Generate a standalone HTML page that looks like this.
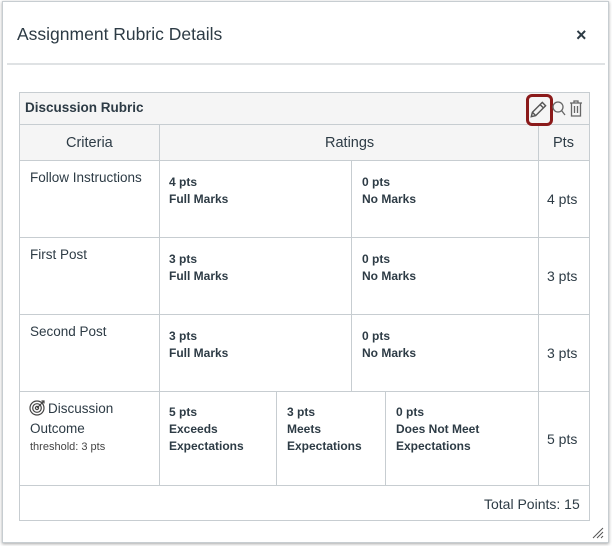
<!DOCTYPE html>
<html><head><style>
*{margin:0;padding:0;box-sizing:border-box}
body{width:612px;height:546px;background:#fff;font-family:"Liberation Sans",sans-serif;color:#2d3b45;position:relative;overflow:hidden}
.a{position:absolute}
.dlg{left:2px;top:1px;width:607px;height:542px;border:1px solid #c7cdd1;box-shadow:0 1px 3px rgba(0,0,0,.35)}
.t{font-size:17.5px;color:#2d3b45}
.hl{left:7px;top:63px;width:598px;height:2px;background:#dfe2e4}
.v{background:#c7cdd1;width:1px}
.h{background:#c7cdd1;height:1px}
.s{font-size:12px;font-weight:bold;line-height:17px;color:#2d3b45}
.c{font-size:13.5px;color:#2d3b45}
.p{font-size:14px;color:#2d3b45}
</style></head><body>
<div class="a dlg"></div>
<div class="a t" style="left:17px;top:24px">Assignment Rubric Details</div>
<div class="a" style="left:576px;top:25px;font-size:18px;font-weight:bold;color:#2d3b45">×</div>
<div class="a hl"></div>
<div class="a" style="left:19px;top:92px;width:571px;height:429px;border:1px solid #c7cdd1"></div>
<div class="a" style="left:20px;top:93px;width:569px;height:67px;background:#f5f5f5"></div>
<div class="a h" style="left:19px;top:124px;width:571px"></div>
<div class="a h" style="left:19px;top:160px;width:571px"></div>
<div class="a h" style="left:19px;top:237px;width:571px"></div>
<div class="a h" style="left:19px;top:314px;width:571px"></div>
<div class="a h" style="left:19px;top:391px;width:571px"></div>
<div class="a h" style="left:19px;top:485px;width:571px"></div>
<div class="a v" style="left:159px;top:124px;height:361px"></div>
<div class="a v" style="left:538px;top:124px;height:361px"></div>
<div class="a v" style="left:351px;top:160px;height:231px"></div>
<div class="a v" style="left:276px;top:391px;height:94px"></div>
<div class="a v" style="left:385px;top:391px;height:94px"></div>
<div class="a" style="left:25px;top:100px;font-size:13.5px;font-weight:bold">Discussion Rubric</div>
<div class="a" style="left:526px;top:94px;width:27px;height:32px;border:3px solid #8b1a1a;border-radius:6px"></div>
<svg class="a" style="left:528px;top:98px" width="22" height="22" viewBox="0 0 20 20" fill="none" stroke="#555" stroke-width="1.3"><path d="M4 13 L13 4 L16 7 L7 16 L3 17 Z M11 6 L14 9 M4 13 L7 16"/></svg>
<svg class="a" style="left:552px;top:100px" width="14" height="18" viewBox="0 0 14 18" fill="none" stroke="#666" stroke-width="1.3"><circle cx="6" cy="7" r="5"/><path d="M9.5 10.5 L13 15"/></svg>
<svg class="a" style="left:568px;top:99px" width="16" height="20" viewBox="0 0 16 20" fill="none" stroke="#666" stroke-width="1.3"><path d="M2 4 H14 M6 4 V2 H10 V4 M3.5 4 V17 H12.5 V4 M6.5 7 V14 M9.5 7 V14"/></svg>
<div class="a c" style="left:66px;top:135px;font-size:14.5px">Criteria</div>
<div class="a c" style="left:325px;top:135px;font-size:14.5px">Ratings</div>
<div class="a c" style="left:553px;top:135px;font-size:14.5px">Pts</div>
<div class="a c" style="left:30px;top:170px">Follow Instructions</div>
<div class="a s" style="left:169px;top:174px">4 pts<br>Full Marks</div>
<div class="a s" style="left:362px;top:174px">0 pts<br>No Marks</div>
<div class="a p" style="left:547px;top:191px">4 pts</div>
<div class="a c" style="left:30px;top:247px">First Post</div>
<div class="a s" style="left:169px;top:251px">3 pts<br>Full Marks</div>
<div class="a s" style="left:362px;top:251px">0 pts<br>No Marks</div>
<div class="a p" style="left:547px;top:268px">3 pts</div>
<div class="a c" style="left:30px;top:324px">Second Post</div>
<div class="a s" style="left:169px;top:328px">3 pts<br>Full Marks</div>
<div class="a s" style="left:362px;top:328px">0 pts<br>No Marks</div>
<div class="a p" style="left:547px;top:345px">3 pts</div>
<svg class="a" style="left:29px;top:399px" width="17" height="17" viewBox="0 0 17 17" fill="none" stroke="#444" stroke-width="1.2"><circle cx="8" cy="9" r="7"/><circle cx="8" cy="9" r="4.3"/><circle cx="8" cy="9" r="1.6"/><path d="M8 9 L15 2 M12.5 2 H15 V4.5"/></svg>
<div class="a c" style="left:48px;top:401px">Discussion</div>
<div class="a c" style="left:30px;top:421px">Outcome</div>
<div class="a" style="left:30px;top:441px;font-size:11px;color:#444">threshold: 3 pts</div>
<div class="a s" style="left:169px;top:404px">5 pts<br>Exceeds<br>Expectations</div>
<div class="a s" style="left:287px;top:404px">3 pts<br>Meets<br>Expectations</div>
<div class="a s" style="left:396px;top:404px">0 pts<br>Does Not Meet<br>Expectations</div>
<div class="a p" style="left:547px;top:431px">5 pts</div>
<div class="a p" style="left:484px;top:496px">Total Points: 15</div>
<svg class="a" style="left:592px;top:527px" width="12" height="12" viewBox="0 0 12 12" stroke="#555" stroke-width="1"><path d="M1 11 L11 1 M5 11 L11 5 M9 11 L11 9"/></svg>
</body></html>
